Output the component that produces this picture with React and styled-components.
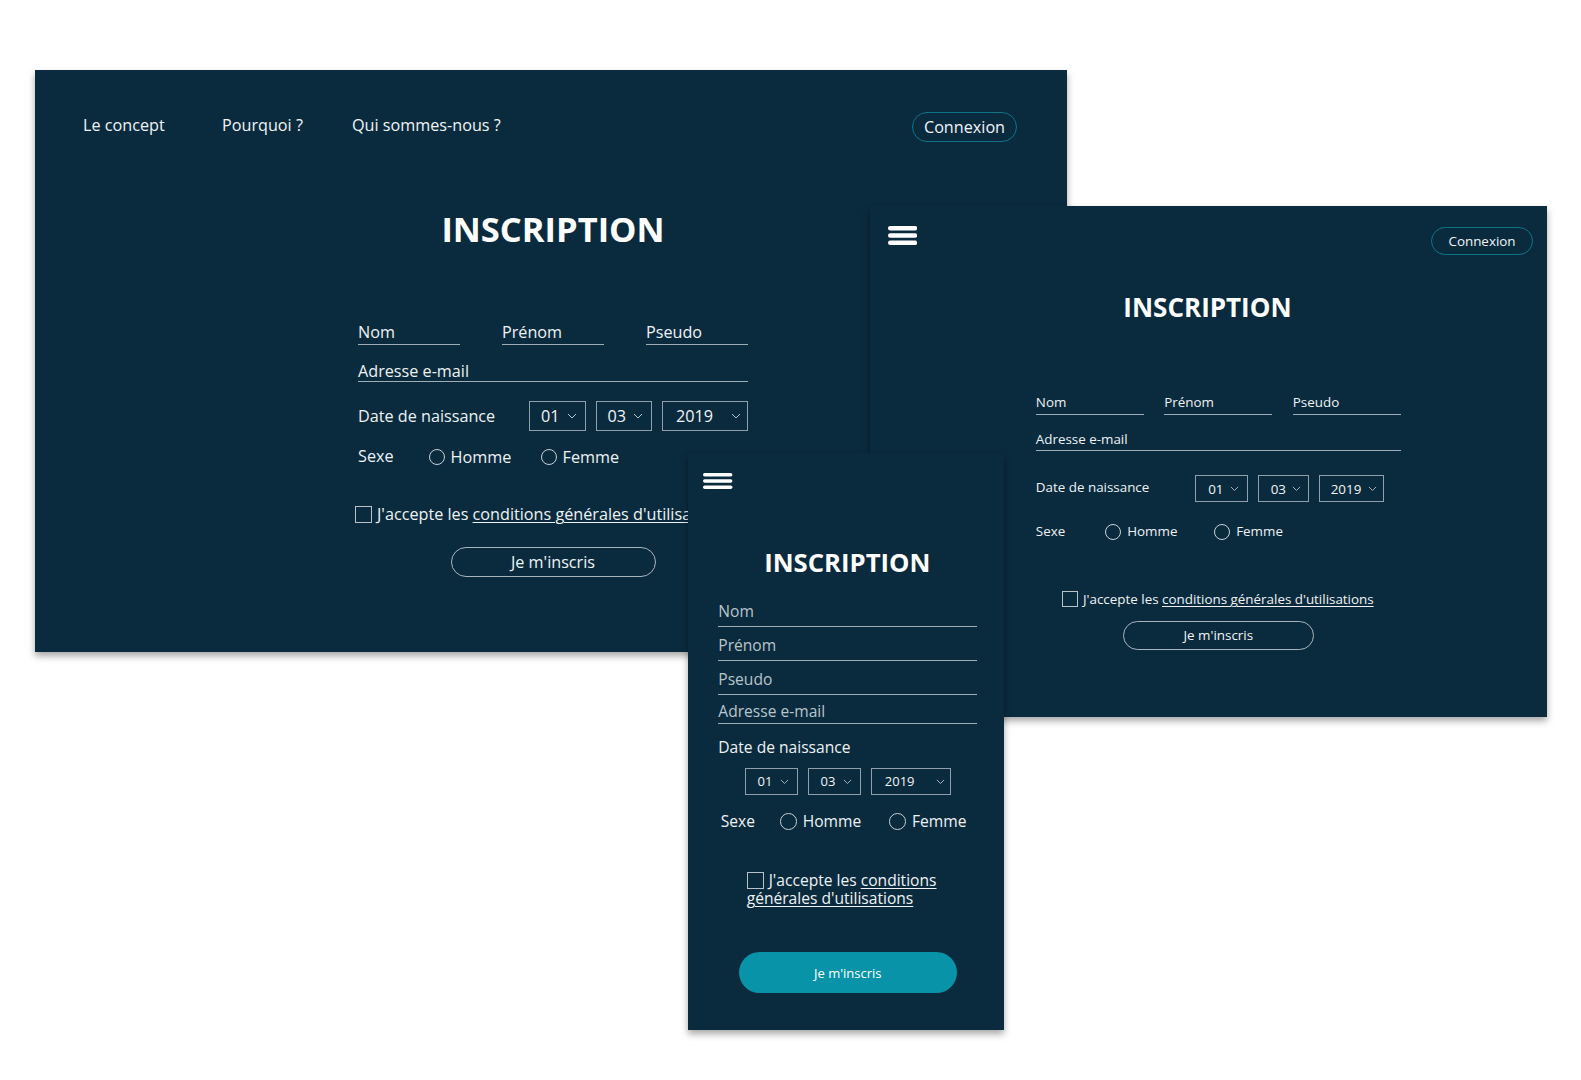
import React from "react";
import styled, { createGlobalStyle } from "styled-components";

const GlobalStyle = createGlobalStyle`
    html, body {
        margin: 0;
        padding: 0;
        background: #ffffff;
        overflow: hidden;
    }
    body {
        font-family: "Open Sans", Lato, "Liberation Sans", sans-serif;
        color: #eef2f4;
    }
`;

const Canvas = styled.div`
    position: relative;
    width: 1581px;
    height: 1080px;
    overflow: hidden;
    background: #ffffff;
`;

// each mockup screen sits on the canvas like a window on a desktop
const Screen = styled.section`
    position: absolute;
    left: ${({ $x }) => $x}px;
    top: ${({ $y }) => $y}px;
    width: ${({ $w }) => $w}px;
    height: ${({ $h }) => $h}px;
    z-index: ${({ $z }) => $z};
    background: #0a2b3e;
    box-shadow: 0 4px 7px rgba(0, 0, 0, 0.35);
    box-sizing: border-box;
    padding: ${({ $pad }) => $pad};
    display: flex;
    flex-direction: column;
    overflow: hidden;
`;

const TopBar = styled.header`
    display: flex;
    justify-content: space-between;
    align-items: flex-start;
`;

const NavLinks = styled.nav`
    display: grid;
    grid-template-columns: 139px 130px auto;
    padding-top: 3px;
`;

const NavLink = styled.a`
    font-size: 16.2px;
    color: #f1f4f6;
    text-decoration: none;
    line-height: 20px;
`;

const PillOutline = styled.button`
    box-sizing: border-box;
    width: ${({ $w }) => $w}px;
    height: ${({ $h }) => $h}px;
    margin-top: ${({ $mt }) => $mt || 0}px;
    border: 1.5px solid ${({ $border }) => $border};
    border-radius: 999px;
    background: transparent;
    color: #f1f4f6;
    font-family: inherit;
    font-size: ${({ $fs }) => $fs}px;
    padding: 0;
    cursor: pointer;
`;

const PillFilled = styled.button`
    box-sizing: border-box;
    width: ${({ $w }) => $w}px;
    height: ${({ $h }) => $h}px;
    border: none;
    border-radius: 999px;
    background: #0893a8;
    color: #ffffff;
    font-family: inherit;
    font-size: ${({ $fs }) => $fs}px;
    padding: 0;
`;

const Title = styled.h1`
    margin: ${({ $mt }) => $mt}px 0 0;
    padding: 0 ${({ $pr }) => $pr || 0}px 0 ${({ $pl }) => $pl || 0}px;
    font-size: ${({ $fs }) => $fs}px;
    line-height: ${({ $fs }) => Math.round($fs + 4)}px;
    font-weight: 700;
    text-align: center;
    color: #ffffff;
`;

const Form = styled.form`
    box-sizing: border-box;
    width: ${({ $w }) => $w}px;
    margin: ${({ $mt }) => $mt}px 0 0 ${({ $ml }) => ($ml == null ? "auto" : `${$ml}px`)};
    margin-right: ${({ $ml }) => ($ml == null ? "auto" : "0")};
    display: flex;
    flex-direction: column;
`;

const FieldGrid = styled.div`
    display: grid;
    grid-template-columns: repeat(3, ${({ $col }) => $col}px);
    justify-content: space-between;
`;

const Field = styled.div`
    font-size: ${({ $fs }) => $fs}px;
    line-height: ${({ $lh }) => $lh}px;
    color: ${({ $muted }) => ($muted ? "#b9c4cb" : "#eef2f4")};
    padding-bottom: ${({ $pb }) => $pb}px;
    border-bottom: 1.5px solid #9fadb6;
    margin-top: ${({ $mt }) => $mt || 0}px;
`;

const Row = styled.div`
    display: flex;
    align-items: center;
    height: ${({ $h }) => ($h ? `${$h}px` : "auto")};
    margin-top: ${({ $mt }) => $mt || 0}px;
    margin-left: ${({ $ml }) => $ml || 0}px;
    justify-content: ${({ $justify }) => $justify || "flex-start"};
`;

const RowLabel = styled.span`
    font-size: ${({ $fs }) => $fs}px;
    line-height: ${({ $lh }) => $lh}px;
    width: ${({ $w }) => ($w ? `${$w}px` : "auto")};
    flex: ${({ $grow }) => ($grow ? 1 : "none")};
    color: #eef2f4;
    margin-top: ${({ $mt }) => $mt || 0}px;
`;

const SelectBox = styled.div`
    box-sizing: border-box;
    width: ${({ $w }) => $w}px;
    height: ${({ $h }) => $h}px;
    border: 1px solid #8fa0ab;
    display: flex;
    align-items: center;
    justify-content: space-between;
    padding: 0 ${({ $pr }) => $pr}px 0 ${({ $pl }) => $pl}px;
    font-size: ${({ $fs }) => $fs}px;
    color: #f1f4f6;
    svg {
        flex: none;
    }
`;

const Choice = styled.label`
    display: flex;
    align-items: center;
    gap: 6px;
    width: ${({ $w }) => ($w ? `${$w}px` : "auto")};
    font-size: ${({ $fs }) => $fs}px;
    line-height: ${({ $fs }) => Math.round($fs + 4)}px;
    color: #eef2f4;
`;

const RadioDot = styled.span`
    box-sizing: border-box;
    width: ${({ $d }) => $d}px;
    height: ${({ $d }) => $d}px;
    border-radius: 50%;
    border: 1px solid #c7d0d6;
    flex: none;
`;

const Tick = styled.span`
    box-sizing: border-box;
    display: inline-block;
    width: ${({ $d }) => $d}px;
    height: ${({ $d }) => $d}px;
    border: 1px solid #b7c2c9;
    vertical-align: -3px;
    margin-right: 5px;
`;

const Consent = styled.p`
    margin: ${({ $mt }) => $mt}px 0 0 ${({ $ml }) => $ml || 0}px;
    font-size: ${({ $fs }) => $fs}px;
    line-height: ${({ $lh }) => $lh}px;
    color: #eef2f4;
    white-space: ${({ $wrap }) => ($wrap ? "normal" : "nowrap")};
    width: ${({ $w }) => ($w ? `${$w}px` : "auto")};
    u {
        text-decoration: underline;
        text-underline-offset: 2px;
        text-decoration-thickness: 1px;
    }
`;

const Centered = styled.div`
    display: flex;
    justify-content: center;
    margin-top: ${({ $mt }) => $mt}px;
`;

const Chevron = ({ size = 9 }) => (
    <svg width={size} height={size * 0.6} viewBox="0 0 10 6" fill="none">
        <polyline points="1,1 5,5 9,1" stroke="#b4c0c8" strokeWidth="1" />
    </svg>
);

const Burger = ({ w, h, bar }) => {
    const gap = (h - bar * 3) / 2;
    return (
        <svg width={w} height={h} viewBox={`0 0 ${w} ${h}`}>
            {[0, 1, 2].map((i) => (
                <rect
                    key={i}
                    x="0"
                    y={i * (bar + gap)}
                    width={w}
                    height={bar}
                    rx={bar / 2}
                    fill="#ffffff"
                />
            ))}
        </svg>
    );
};

const Selects = ({ sizes, pads, h, fs, gap, chev }) => (
    <>
        {["01", "03", "2019"].map((v, i) => (
            <SelectBox
                key={v}
                $w={sizes[i]}
                $h={h}
                $fs={fs}
                $pl={pads[i][0]}
                $pr={pads[i][1]}
                style={{ marginLeft: i ? gap : 0 }}
            >
                {v}
                <Chevron size={chev} />
            </SelectBox>
        ))}
    </>
);

function DesktopScreen() {
    return (
        <Screen $x={35} $y={70} $w={1032} $h={582} $z={1} $pad="42px 50px 0 48px">
            <TopBar>
                <NavLinks>
                    <NavLink>Le concept</NavLink>
                    <NavLink>Pourquoi ?</NavLink>
                    <NavLink>Qui sommes-nous ?</NavLink>
                </NavLinks>
                <PillOutline $w={105} $h={30} $fs={16.2} $border="#0d7486">
                    Connexion
                </PillOutline>
            </TopBar>
            <Title $fs={34.5} $mt={67} $pl={6}>INSCRIPTION</Title>
            <Form $w={390} $mt={74} style={{ transform: "translateX(3px)" }}>
                <FieldGrid $col={102}>
                    <Field $fs={16.2} $lh={20} $pb={2}>Nom</Field>
                    <Field $fs={16.2} $lh={20} $pb={2}>Prénom</Field>
                    <Field $fs={16.2} $lh={20} $pb={2}>Pseudo</Field>
                </FieldGrid>
                <Field $fs={16.2} $lh={20} $pb={0} $mt={16}>Adresse e-mail</Field>
                <Row $mt={19}>
                    <RowLabel $fs={16.2} $lh={20} $grow>Date de naissance</RowLabel>
                    <Selects
                        sizes={[56.5, 56.5, 86]}
                        pads={[[11, 8], [11, 8], [13, 6]]}
                        h={30}
                        fs={16.2}
                        gap={10}
                        chev={10}
                    />
                </Row>
                <Row $mt={16} $h={20}>
                    <RowLabel $fs={16.2} $lh={20} $w={70.6} $mt={-3}>Sexe</RowLabel>
                    <Choice $fs={16.2} $w={112}><RadioDot $d={16} />Homme</Choice>
                    <Choice $fs={16.2}><RadioDot $d={16} />Femme</Choice>
                </Row>
                <Consent $fs={16.2} $lh={20} $mt={37} $ml={-3}>
                    <Tick $d={17} />J'accepte les <u>conditions générales d'utilisations</u>
                </Consent>
                <Centered $mt={23}>
                    <PillOutline $w={205} $h={30} $fs={16.2} $border="#a9b5bd">
                        Je m'inscris
                    </PillOutline>
                </Centered>
            </Form>
        </Screen>
    );
}

function TabletScreen() {
    return (
        <Screen $x={870} $y={206} $w={677} $h={511} $z={2} $pad="20px 14px 0 17.5px">
            <TopBar>
                <Burger w={29.3} h={19} bar={4.5} />
                <PillOutline $w={102} $h={28} $mt={1} $fs={13.4} $border="#0d7486">
                    Connexion
                </PillOutline>
            </TopBar>
            <Title $fs={26} $mt={36.5} $pr={5.6}>INSCRIPTION</Title>
            <Form $w={365} $ml={148.3} $mt={72}>
                <FieldGrid $col={108}>
                    <Field $fs={13.4} $lh={17} $pb={3}>Nom</Field>
                    <Field $fs={13.4} $lh={17} $pb={3}>Prénom</Field>
                    <Field $fs={13.4} $lh={17} $pb={3}>Pseudo</Field>
                </FieldGrid>
                <Field $fs={13.4} $lh={17} $pb={2} $mt={16}>Adresse e-mail</Field>
                <Row $mt={24.7}>
                    <RowLabel $fs={13.4} $lh={17} $w={159.4} $mt={-3}>Date de naissance</RowLabel>
                    <Selects
                        sizes={[52.5, 51.5, 64.6]}
                        pads={[[12, 7.5], [12, 7.5], [10.5, 5.6]]}
                        h={27.3}
                        fs={13.4}
                        gap={10}
                        chev={9}
                    />
                </Row>
                <Row $mt={20.7} $h={17}>
                    <RowLabel $fs={13.4} $lh={17} $w={69.4}>Sexe</RowLabel>
                    <Choice $fs={13.4} $w={109}><RadioDot $d={16} />Homme</Choice>
                    <Choice $fs={13.4}><RadioDot $d={16} />Femme</Choice>
                </Row>
                <Consent $fs={13.4} $lh={16} $mt={51} $ml={26.2}>
                    <Tick $d={16} />J'accepte les <u>conditions générales d'utilisations</u>
                </Consent>
                <Centered $mt={14.2}>
                    <PillOutline $w={190.6} $h={28.2} $fs={13.4} $border="#a9b5bd">
                        Je m'inscris
                    </PillOutline>
                </Centered>
            </Form>
        </Screen>
    );
}

function MobileScreen() {
    return (
        <Screen $x={687.7} $y={452.7} $w={316} $h={577} $z={3} $pad="20.6px 16px 0 15.6px">
            <TopBar>
                <Burger w={29.4} h={16} bar={3.4} />
            </TopBar>
            <Title $fs={25.7} $mt={59} $pl={3.6}>INSCRIPTION</Title>
            <Form $w={259} $ml={15} $mt={23.5}>
                <Field $fs={15.6} $lh={19} $pb={5} $muted>Nom</Field>
                <Field $fs={15.6} $lh={19} $pb={5} $mt={9} $muted>Prénom</Field>
                <Field $fs={15.6} $lh={19} $pb={5} $mt={9} $muted>Pseudo</Field>
                <Field $fs={15.6} $lh={19} $pb={2} $mt={7} $muted>Adresse e-mail</Field>
                <RowLabel $fs={15.6} $lh={19} $mt={14}>Date de naissance</RowLabel>
                <Row $mt={11} $justify="center">
                    <Selects
                        sizes={[53, 53, 80]}
                        pads={[[11.7, 7.3], [11.7, 7.3], [13, 4.3]]}
                        h={27.3}
                        fs={13}
                        gap={10}
                        chev={9}
                    />
                </Row>
                <Row $mt={16.8} $ml={2.4} $h={19}>
                    <RowLabel $fs={15.6} $lh={19} $w={59.3}>Sexe</RowLabel>
                    <Choice $fs={15.6} $w={109.3}><RadioDot $d={16.7} />Homme</Choice>
                    <Choice $fs={15.6}><RadioDot $d={16.7} />Femme</Choice>
                </Row>
                <Consent $fs={15.6} $lh={18.3} $mt={40} $ml={28.4} $w={205} $wrap>
                    <Tick $d={17} />J'accepte les <u>conditions générales d'utilisations</u>
                </Consent>
                <Centered $mt={45}>
                    <PillFilled $w={218} $h={40.6} $fs={13}>
                        Je m'inscris
                    </PillFilled>
                </Centered>
            </Form>
        </Screen>
    );
}

export default function App() {
    return (
        <>
            <GlobalStyle />
            <Canvas>
                <DesktopScreen />
                <TabletScreen />
                <MobileScreen />
            </Canvas>
        </>
    );
}
